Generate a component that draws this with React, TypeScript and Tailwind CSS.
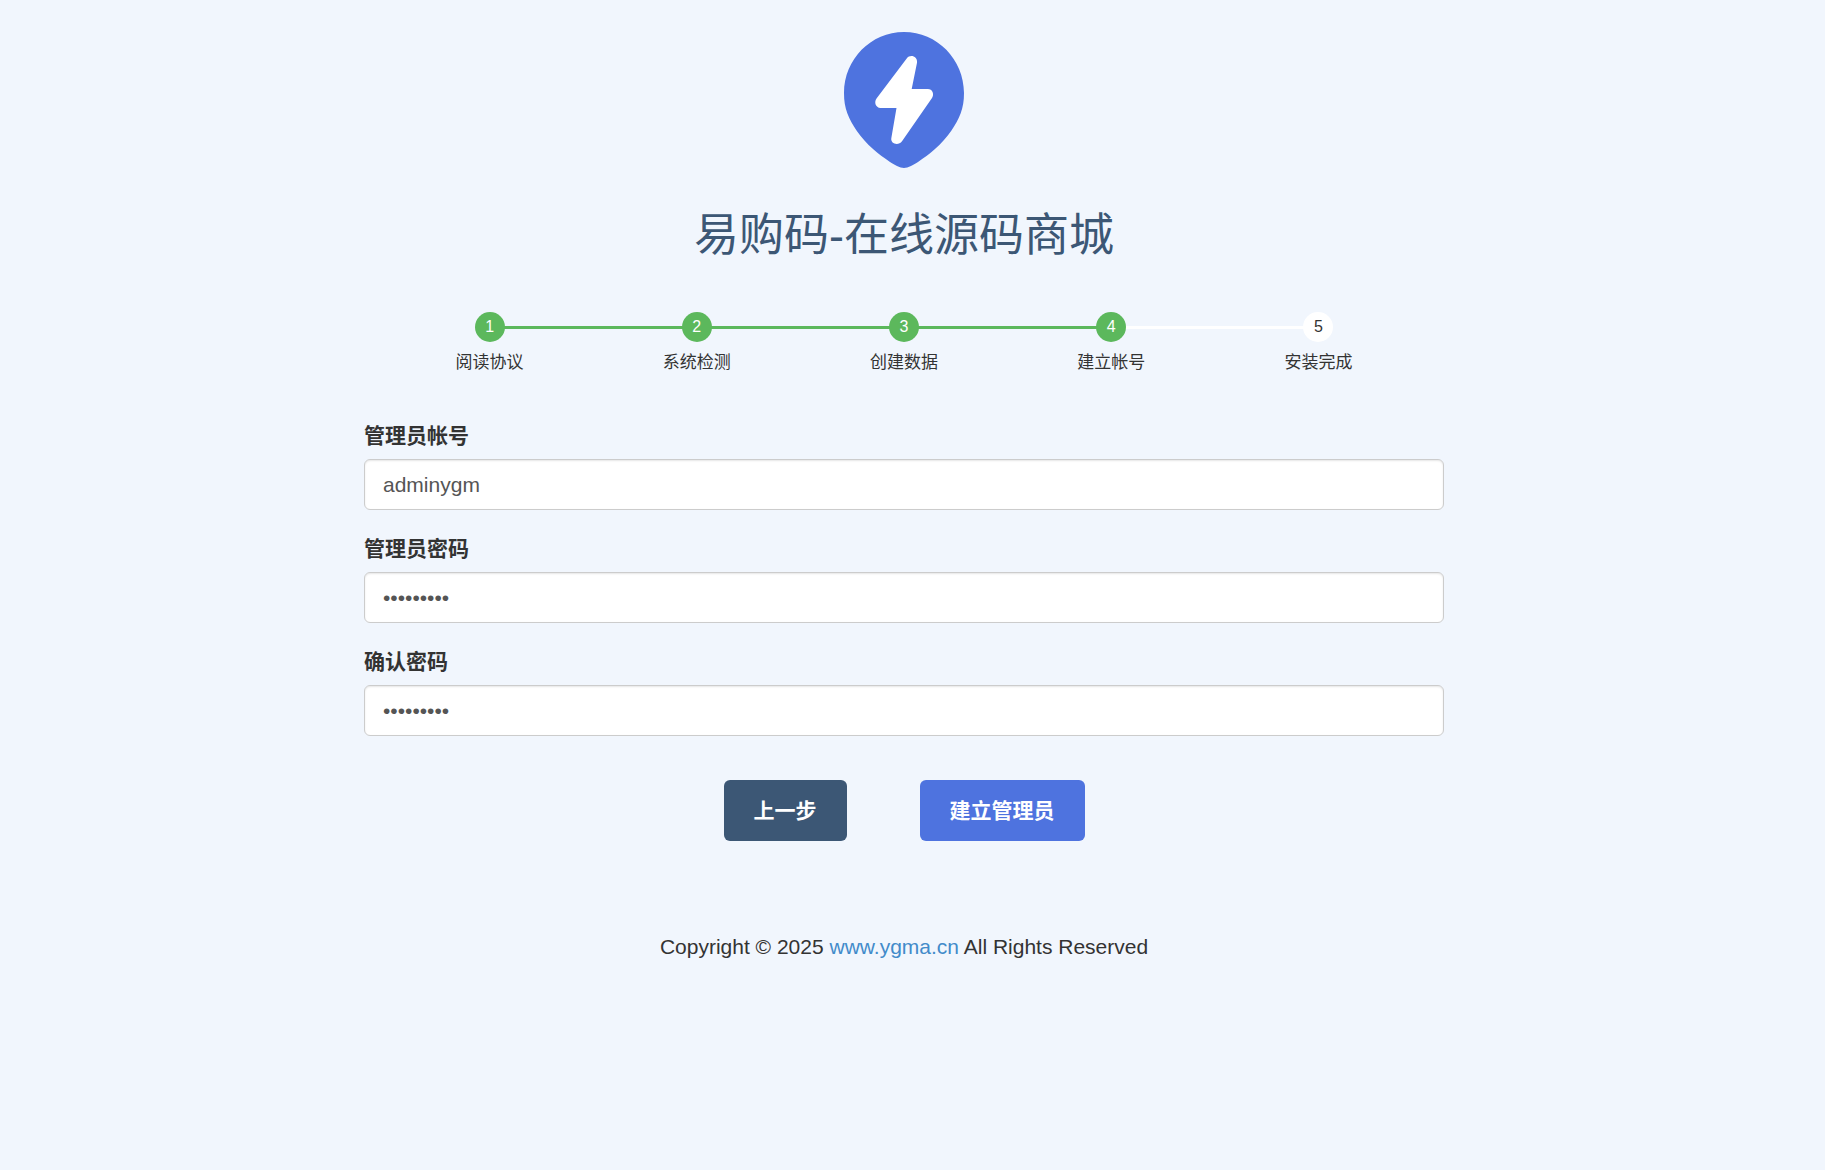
import { FormEvent, useState } from "react";

const steps = ["阅读协议", "系统检测", "创建数据", "建立帐号", "安装完成"];
const currentStep = 4;

export default function App() {
  const [account, setAccount] = useState("adminygm");
  const [password, setPassword] = useState("adminygm1");
  const [confirmPassword, setConfirmPassword] = useState("adminygm1");

  const submitAdmin = (event: FormEvent) => {
    event.preventDefault();
  };

  return (
    <div className="min-h-screen bg-[#f1f6fd] pr-[17px] font-['Liberation_Sans','Noto_Sans_CJK_SC',sans-serif] text-[21px] leading-[30px] text-[#333333]">
      <main className="mx-auto flex w-full max-w-[1080px] flex-col pt-8">
        <header className="flex flex-col items-center gap-[38px]">
          <Logo />
          <h1 className="text-center text-[45px] leading-[60px] text-[#3c5775]">
            易购码-在线源码商城
          </h1>
        </header>

        <StepBar />

        <form onSubmit={submitAdmin} className="mt-[46px] flex flex-col">
          <div className="flex flex-col gap-6">
            <Field
              id="account"
              label="管理员帐号"
              type="text"
              value={account}
              onChange={setAccount}
            />
            <Field
              id="password"
              label="管理员密码"
              type="password"
              value={password}
              onChange={setPassword}
            />
            <Field
              id="confirmPassword"
              label="确认密码"
              type="password"
              value={confirmPassword}
              onChange={setConfirmPassword}
            />
          </div>

          <div className="mt-11 flex justify-center gap-[73px]">
            <button
              type="button"
              className="h-[61px] rounded-md bg-[#3c5775] px-[30px] font-bold text-white"
            >
              上一步
            </button>
            <button
              type="submit"
              className="h-[61px] rounded-md bg-[#4e73df] px-[30px] font-bold text-white"
            >
              建立管理员
            </button>
          </div>
        </form>

        <footer className="mt-[91px] text-center">
          Copyright © 2025{" "}
          <a href="#" className="text-[#428bca]">
            www.ygma.cn
          </a>{" "}
          All Rights Reserved
        </footer>
      </main>
    </div>
  );
}

function StepBar() {
  return (
    <ol className="mt-[46px] grid grid-cols-5 px-[22px] text-base leading-6">
      {steps.map((name, index) => {
        const step = index + 1;
        const done = step <= currentStep;

        return (
          <li key={name} className="relative flex flex-col items-center gap-[9px]">
            {step > 1 && (
              <span
                className={`absolute top-[14px] right-1/2 h-[3px] w-full ${
                  done ? "bg-[#5cb85c]" : "bg-white"
                }`}
              />
            )}
            <span
              className={`relative z-10 flex size-[30px] items-center justify-center rounded-full ${
                done ? "bg-[#5cb85c] text-white" : "bg-white"
              }`}
            >
              {step}
            </span>
            <span className="text-[17px]">{name}</span>
          </li>
        );
      })}
    </ol>
  );
}

function Field({
  id,
  label,
  type,
  value,
  onChange,
}: {
  id: string;
  label: string;
  type: "text" | "password";
  value: string;
  onChange: (value: string) => void;
}) {
  return (
    <div className="flex flex-col gap-2">
      <label htmlFor={id} className="font-bold">
        {label}
      </label>
      <input
        id={id}
        type={type}
        value={value}
        autoComplete="off"
        onChange={(event) => onChange(event.target.value)}
        className="h-[51px] w-full rounded-md border border-[#cccccc] bg-white px-[18px] text-[#555555] shadow-[inset_0_1px_2px_rgba(0,0,0,0.1)] outline-none focus:border-[#66afe9]"
      />
    </div>
  );
}

function Logo() {
  return (
    <svg viewBox="0 0 120 136" className="h-[136px] w-[120px]" aria-hidden="true">
      <path
        fill="#4e73df"
        d="M60 0C93.1 0 120 27.3 120 61C120 69 119 75 116.7 81.3C114.5 87.5 111 93.5 107.300 98.700C103 105 97 111.500 90.700 117.300C86 121.500 80 126 74 130C70 132.500 64 136 60 136C56 136 50 132.500 46 130C40 126 34 121.500 29.300 117.300C23 111.500 17 105 12.700 98.700C9 93.500 5.500 87.500 3.300 81.300C1 75 0 69 0 61C0 27.300 26.900 0 60 0Z"
      />
      <path
        fill="#fff"
        d="M62.700 26.500C66.300 21.800 73.800 24.500 73 30.700L67.700 57H83.800C88.500 57 90.500 62 88 66L58 109.300C54.500 114 46.400 112 47.300 106.300L52.500 76H36.500C31.500 75.800 29.800 70 32.700 66.300Z"
      />
    </svg>
  );
}
